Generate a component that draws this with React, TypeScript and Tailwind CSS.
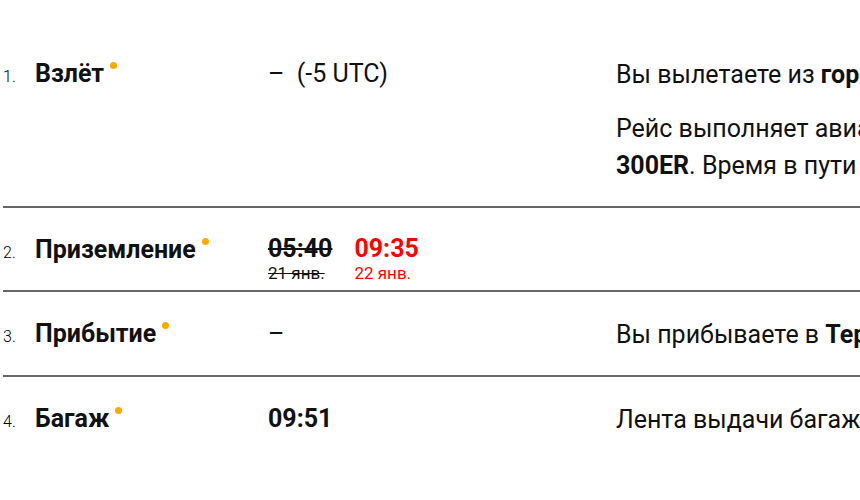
import React from 'react';

type Step = {
  label: string;
  time: React.ReactNode;
  info: React.ReactNode;
};

const Dot = () => (
  <span className="ml-[6px] mt-[10px] inline-block h-[7px] w-[7px] shrink-0 self-start rounded-full bg-[#ffa800]" />
);

const steps: Step[] = [
  {
    label: 'Взлёт',
    time: <span className="font-normal">–&nbsp;&nbsp;(-5 UTC)</span>,
    info: (
      <div className="pb-[3px]">
        <p className="mb-[17px] whitespace-nowrap">
          Вы вылетаете из <b>города Канкун, Терминал 3</b>
        </p>
        <p className="whitespace-nowrap">
          Рейс выполняет авиакомпания Aeroméxico на <b>Boeing 777-</b>
          <br />
          <b>300ER</b>. Время в пути 4 ч 55 мин
        </p>
      </div>
    ),
  },
  {
    label: 'Приземление',
    time: (
      <div className="flex gap-[22px] pt-[6px]">
        <div className="flex flex-col">
          <span className="leading-[30px] line-through">05:40</span>
          <span className="text-[17px] font-normal leading-[18px] line-through">21 янв.</span>
        </div>
        <div className="flex flex-col text-[#ff0000]">
          <span className="leading-[30px]">09:35</span>
          <span className="text-[17px] font-normal leading-[18px]">22 янв.</span>
        </div>
      </div>
    ),
    info: null,
  },
  {
    label: 'Прибытие',
    time: <span className="font-normal">–</span>,
    info: (
      <p className="whitespace-nowrap">
        Вы прибываете в <b>Терминал 1</b>
      </p>
    ),
  },
  {
    label: 'Багаж',
    time: <span>09:51</span>,
    info: <p className="whitespace-nowrap">Лента выдачи багажа № 5</p>,
  },
];

const rowHeights = ['', 'h-[84px]', 'h-[85px]', 'h-[84px]'];

export default function App() {
  return (
    <div className="h-[500px] w-[860px] overflow-hidden bg-white font-['Roboto',sans-serif] text-[25px] text-[#111]">
      <ol className="pt-[32px] pl-[3px]">
        {steps.map((step, i) => (
          <li
            key={step.label}
            className={`flex items-start pt-[20px] ${rowHeights[i]} ${i === 0 ? 'pb-[19px]' : ''} ${i < steps.length - 1 ? 'border-b-2 border-[#666]' : ''}`}
          >
            <span className="w-[32px] shrink-0 pt-[3px] text-[16px] font-light leading-[44px] text-black">{i + 1}.</span>
            <div className="flex w-[233px] shrink-0 items-start">
              <span className="font-bold leading-[44px]">{step.label}</span>
              <Dot />
            </div>
            <div className="w-[348px] shrink-0 font-bold leading-[44px]">{step.time}</div>
            <div className="pt-[4px] leading-[37px]">{step.info}</div>
          </li>
        ))}
      </ol>
    </div>
  );
}
